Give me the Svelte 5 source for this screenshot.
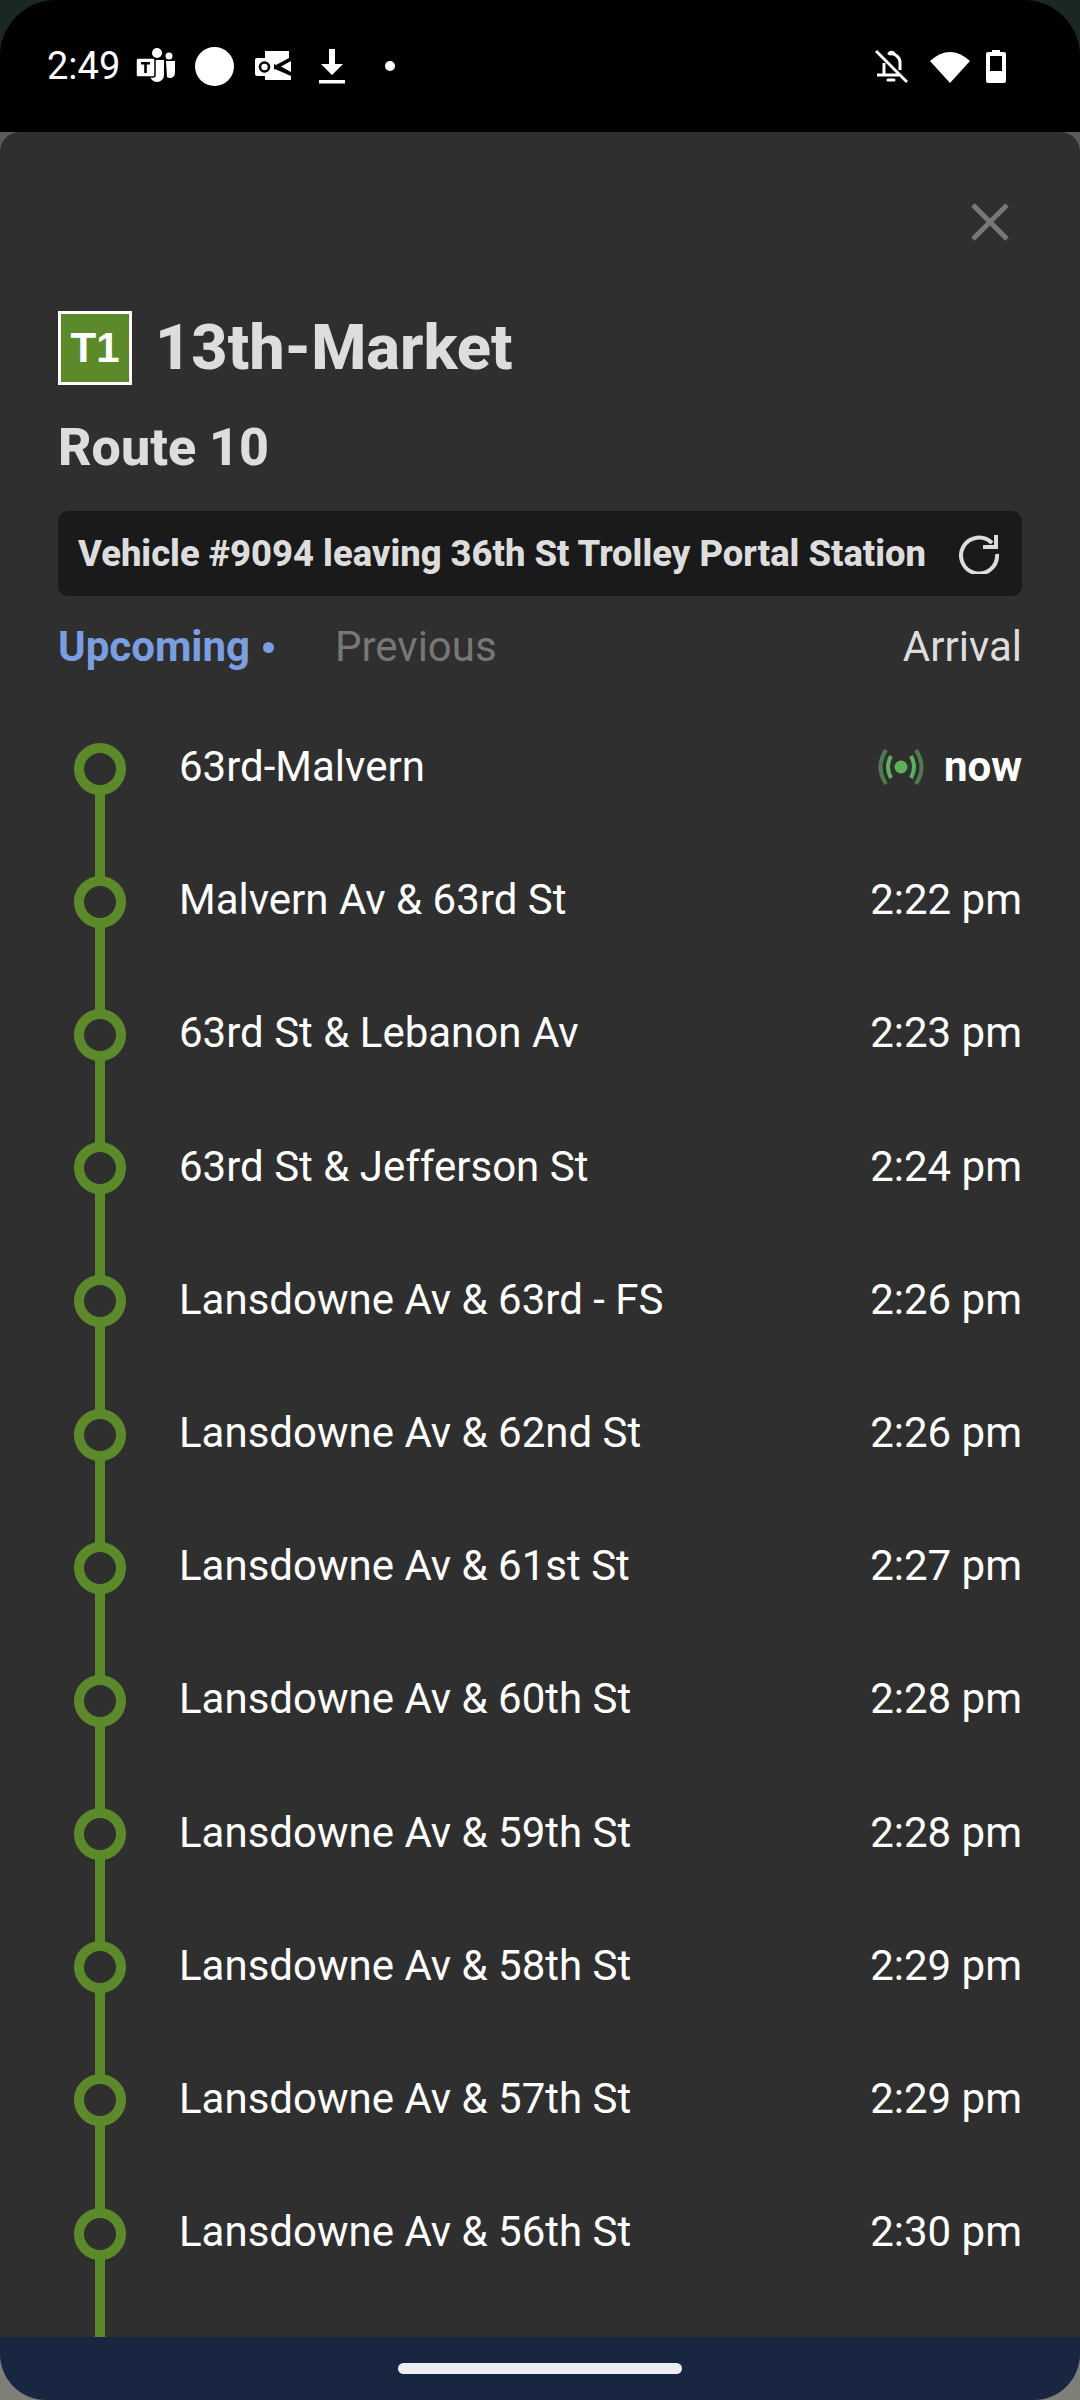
<script>
  const stops = [
    ['Malvern Av & 63rd St', '2:22 pm'],
    ['63rd St & Lebanon Av', '2:23 pm'],
    ['63rd St & Jefferson St', '2:24 pm'],
    ['Lansdowne Av & 63rd - FS', '2:26 pm'],
    ['Lansdowne Av & 62nd St', '2:26 pm'],
    ['Lansdowne Av & 61st St', '2:27 pm'],
    ['Lansdowne Av & 60th St', '2:28 pm'],
    ['Lansdowne Av & 59th St', '2:28 pm'],
    ['Lansdowne Av & 58th St', '2:29 pm'],
    ['Lansdowne Av & 57th St', '2:29 pm'],
    ['Lansdowne Av & 56th St', '2:30 pm']
  ]
</script>

<div class="screen">
  <header class="status">
    <span class="clock">2:49</span>
    <svg class="teams" width="40" height="38" viewBox="0 0 40 38" fill="#fff">
      <circle cx="21" cy="6" r="5" />
      <circle cx="33" cy="9" r="3.5" />
      <path d="M14 13h14v15a7 7 0 0 1-14 0z" />
      <path d="M30 14h9v12a5 5 0 0 1-8 4z" />
      <rect x="0" y="11" width="19" height="19" rx="2" stroke="#000" stroke-width="1.5" />
      <path d="M5 15h9v2.4h-3.2V26H8.200V17.400H5z" fill="#000" />
    </svg>
    <span class="blob"></span>
    <svg class="outlook" width="38" height="30" viewBox="0 0 38 30" fill="#fff">
      <path d="M10 0h24v7L21 14 10 8zM36 10v11l-10-5.500zM10 22h4l6-4 16 7v4H10z" />
      <rect x="0" y="7" width="19" height="18" rx="2" />
      <circle cx="9.500" cy="16" r="4.500" fill="none" stroke="#000" stroke-width="2.600" />
    </svg>
    <svg class="download" width="26" height="35" viewBox="0 0 26 35" fill="#fff">
      <path d="M10 0h6v15h8L13 26 2 15h8z" />
      <rect x="0" y="31" width="26" height="3.500" />
    </svg>
    <span class="dot"></span>
    <span class="spacer"></span>
    <svg class="bell" width="33" height="35" viewBox="0 0 33 35" fill="none" stroke="#fff" stroke-width="3">
      <path d="M9 14v12M2 26h22M25 21v-8a9 9 0 0 0-11-8" />
      <path d="M14 4.500a3 3 0 0 1 5 0M13 31h6" stroke-linecap="round" />
      <path d="M1 2l31 31" />
    </svg>
    <svg class="wifi" width="40" height="33" viewBox="0 0 40 33" fill="#fff">
      <path d="M0 11Q20-7 40 11L20 33z" />
    </svg>
    <svg class="battery" width="20" height="33" viewBox="0 0 20 33" fill="#fff">
      <path d="M6 0h8v2h4a2 2 0 0 1 2 2v27a2 2 0 0 1-2 2H2a2 2 0 0 1-2-2V4a2 2 0 0 1 2-2h4zM4 6v15h12V6z" fill-rule="evenodd" />
    </svg>
  </header>

  <main class="sheet">
    <div class="close-row">
      <svg width="38" height="38" viewBox="0 0 38 38" stroke="#777" stroke-width="5">
        <path d="M2 2l34 34M36 2L2 36" />
      </svg>
    </div>

    <div class="title-row">
      <span class="badge">T1</span>
      <h1>13th-Market</h1>
    </div>
    <h2>Route 10</h2>

    <div class="vehicle">
      <span>Vehicle #9094 leaving 36th St Trolley Portal Station</span>
      <svg width="40" height="40" viewBox="0 0 40 40" fill="none" stroke="#ddd" stroke-width="4">
        <path d="M33 9A18 18 0 1 0 38 20" />
        <path d="M37 1v12H24" />
      </svg>
    </div>

    <div class="tabs">
      <span class="tab active">Upcoming<i></i></span>
      <span class="tab">Previous</span>
      <span class="arrival">Arrival</span>
    </div>

    <ul class="stops">
      <li>
        <span class="node"></span>
        <span class="name">63rd-Malvern</span>
        <span class="live">
          <svg width="46" height="38" viewBox="0 0 46 38" fill="none" stroke-width="4">
            <circle cx="23" cy="19" r="6.500" fill="#5cb25c" stroke="none" />
            <path d="M13 8Q7 19 13 30M33 8Q39 19 33 30" stroke="#5cb25c" />
            <path d="M8 2Q-3 19 8 36M38 2Q49 19 38 36" stroke="#4f7a4f" />
          </svg>
          <b>now</b>
        </span>
      </li>
      {#each stops as [name, time]}
        <li>
          <span class="node"></span>
          <span class="name">{name}</span>
          <span class="time">{time}</span>
        </li>
      {/each}
    </ul>
  </main>

  <footer class="nav"><span class="pill"></span></footer>
</div>

<style>
  :global(body) {
    margin: 0;
    background: #000;
  }

  .screen {
    width: 1080px;
    height: 2400px;
    display: flex;
    flex-direction: column;
    overflow: hidden;
    font-family: Roboto, sans-serif;
    background: linear-gradient(#1b2725 0 132px, #5a5a5a 132px 200px, #7f7f78 200px);
  }

  .status {
    height: 132px;
    flex: none;
    box-sizing: border-box;
    padding: 0 74px 0 47px;
    display: flex;
    align-items: center;
    background: #000;
    border-radius: 56px 56px 0 0;
    color: #fff;
  }

  .clock {
    font-size: 38px;
    width: 89px;
  }

  .teams { margin-right: 19px; }

  .blob {
    width: 39px;
    height: 39px;
    border-radius: 50%;
    background: #fff;
    margin-right: 21px;
  }

  .outlook { margin-right: 26px; }
  .download { margin-right: 40px; }

  .dot {
    width: 10px;
    height: 10px;
    border-radius: 50%;
    background: #fff;
  }

  .spacer { flex: 1; }

  .bell { margin-right: 22px; }
  .wifi { margin-right: 16px; }

  .sheet {
    flex: 1;
    min-height: 0;
    overflow: hidden;
    box-sizing: border-box;
    padding: 0 58px;
    background: #2f2f2f;
    border-radius: 20px 20px 0 0;
  }

  .close-row {
    display: flex;
    justify-content: flex-end;
    padding: 71px 13px 0 0;
    height: 179px;
    box-sizing: border-box;
  }

  .title-row {
    display: flex;
    align-items: center;
    gap: 23px;
  }

  .badge {
    width: 74px;
    height: 74px;
    box-sizing: border-box;
    border: 3px solid #fff;
    background: #5c8a2a;
    color: #fff;
    font-size: 42px;
    font-weight: 700;
    font-family: "Liberation Sans", Roboto, sans-serif;
    display: flex;
    align-items: center;
    justify-content: center;
  }

  h1 {
    margin: 0;
    font-size: 63px;
    line-height: 74px;
    font-weight: 800;
    color: #ddd;
  }

  h2 {
    margin: 33px 0 0;
    font-size: 52px;
    line-height: 60px;
    font-weight: 800;
    color: #ddd;
  }

  .vehicle {
    margin-top: 33px;
    height: 85px;
    box-sizing: border-box;
    padding: 0 23px 0 20px;
    display: flex;
    align-items: center;
    justify-content: space-between;
    background: #1a1a1a;
    border-radius: 10px;
    font-size: 36.400px;
    font-weight: 800;
    color: #ddd;
    white-space: nowrap;
  }

  .tabs {
    margin-top: 26px;
    display: flex;
    align-items: baseline;
    font-size: 42px;
    line-height: 50px;
  }

  .tab {
    color: #777;
    margin-right: 61px;
  }

  .tab.active {
    color: #7a9fe0;
    font-weight: 700;
    display: inline-flex;
    align-items: center;
  }

  .tab.active i {
    width: 11px;
    height: 11px;
    margin-left: 13px;
    border-radius: 50%;
    background: #7a9fe0;
  }

  .arrival {
    margin-left: auto;
    color: #ddd;
  }

  .stops {
    list-style: none;
    margin: 28px 0 0;
    padding: 0;
    font-size: 42px;
    color: #fff;
  }

  li {
    position: relative;
    height: 133.200px;
    display: flex;
    align-items: center;
    padding-left: 121px;
  }

  /* the rail runs through every row and on under the nav bar */
  li::before {
    content: '';
    position: absolute;
    left: 37px;
    top: 50%;
    width: 10px;
    height: 133.200px;
    background: #5c8a2a;
  }

  .node {
    position: absolute;
    left: 16px;
    top: 50%;
    width: 52px;
    height: 52px;
    box-sizing: border-box;
    margin-top: -24px;
    border: 10px solid #5c8a2a;
    border-radius: 50%;
    background: #2f2f2f;
  }

  .name { flex: 1; }

  .live {
    display: flex;
    align-items: center;
    gap: 20px;
  }

  .live b { font-weight: 700; }

  .nav {
    height: 63px;
    flex: none;
    position: relative;
    display: flex;
    justify-content: center;
    padding-top: 26px;
    box-sizing: border-box;
    background: #182642;
    border-radius: 0 0 46px 46px;
  }

  .pill {
    width: 284px;
    height: 11px;
    border-radius: 6px;
    background: #eceef2;
  }
</style>
